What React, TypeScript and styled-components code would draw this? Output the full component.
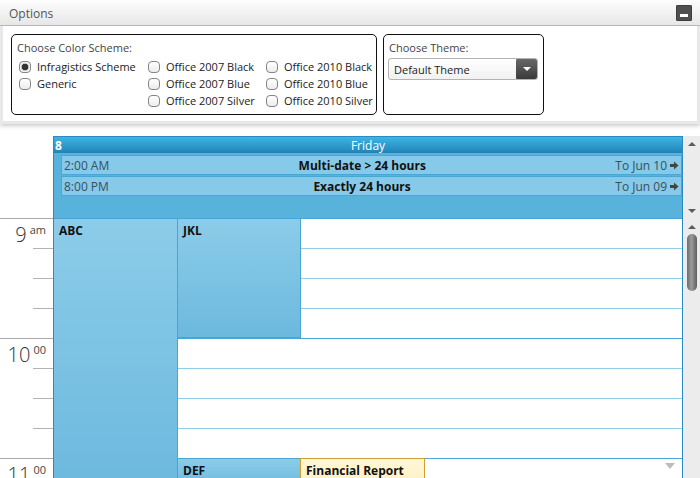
import styled, { createGlobalStyle } from 'styled-components';

const GlobalStyle = createGlobalStyle`
  html, body {
    margin: 0;
    padding: 0;
    background: #fff;
    overflow: hidden;
  }
  body {
    font-family: 'Open Sans', 'Noto Sans', 'Liberation Sans', sans-serif;
    color: #222;
  }
  * { box-sizing: border-box; }
`;

const schemes = [
  ['Infragistics Scheme', 'Office 2007 Black', 'Office 2010 Black'],
  ['Generic', 'Office 2007 Blue', 'Office 2010 Blue'],
  ['', 'Office 2007 Silver', 'Office 2010 Silver'],
];

const allDay = [
  { time: '2:00 AM', title: 'Multi-date > 24 hours', to: 'To Jun 10' },
  { time: '8:00 PM', title: 'Exactly 24 hours', to: 'To Jun 09' },
];

const hours = [
  { hour: '9', suffix: 'am' },
  { hour: '10', suffix: '00' },
  { hour: '11', suffix: '00' },
];

type Appt = {
  title: string;
  col: number;
  row: number;
  span: number;
  tone?: 'blue' | 'yellow';
};

const appointments: Appt[] = [
  { title: 'ABC', col: 1, row: 1, span: 9 },
  { title: 'JKL', col: 2, row: 1, span: 4 },
  { title: 'DEF', col: 2, row: 9, span: 1 },
  { title: 'Financial Report', col: 3, row: 9, span: 1, tone: 'yellow' },
];

export default function App() {
  return (
    <>
      <GlobalStyle />
      <Panel>
        <PanelHeader>
          <span>Options</span>
          <MinButton aria-label='minimize' />
        </PanelHeader>
        <PanelBody>
          <GroupBox $width={366}>
            <GroupTitle>Choose Color Scheme:</GroupTitle>
            <SchemeGrid>
              {schemes.flat().map((label, i) =>
                label ? (
                  <Option key={i}>
                    <Check $checked={i === 0} />
                    {label}
                  </Option>
                ) : (
                  <span key={i} />
                )
              )}
            </SchemeGrid>
          </GroupBox>
          <GroupBox $width={161}>
            <GroupTitle>Choose Theme:</GroupTitle>
            <Select>
              <span>Default Theme</span>
              <SelectButton>
                <Caret $dir='down' $color='#fff' />
              </SelectButton>
            </Select>
          </GroupBox>
        </PanelBody>
      </Panel>

      <Calendar>
        <TopRow>
          <Gutter />
          <DayHead>
            <DayHeader>
              <DayNumber>8</DayNumber>
              <span>Friday</span>
              <span />
            </DayHeader>
            <AllDayArea>
              {allDay.map((a) => (
                <AllDayEvent key={a.title}>
                  <EventTime>{a.time}</EventTime>
                  <AllDayTitle>{a.title}</AllDayTitle>
                  <EventTime>
                    {a.to}
                    <svg width='9' height='9' viewBox='0 0 9 9'>
                      <path d='M0 3h4V0.5L8.5 4.5 4 8.5V6H0z' fill='#444' />
                    </svg>
                  </EventTime>
                </AllDayEvent>
              ))}
            </AllDayArea>
          </DayHead>
          <ScrollBar $pad='6px 0 5px'>
            <Caret $dir='up' $color='#5c5c5c' />
            <Caret $dir='down' $color='#5c5c5c' />
          </ScrollBar>
        </TopRow>

        <GridRow>
          <TimeColumn>
            {hours.map((h) => (
              <HourBlock key={h.hour}>
                <HourLabel>
                  <HourDigits>{h.hour}</HourDigits>
                  <HourSuffix>{h.suffix}</HourSuffix>
                </HourLabel>
                <MinorSlot />
                <MinorSlot />
                <MinorSlot />
              </HourBlock>
            ))}
          </TimeColumn>
          <DayColumn>
            {Array.from({ length: 9 }, (_, i) => (
              <Slot key={i} $row={i + 1} $hour={i % 4 === 0} />
            ))}
            {appointments.map((a) => (
              <Appointment
                key={a.title}
                $col={a.col}
                $row={a.row}
                $span={a.span}
                $tone={a.tone ?? 'blue'}
              >
                {a.title}
              </Appointment>
            ))}
            <MoreIndicator />
          </DayColumn>
          <ScrollBar $pad='7px 0 6px'>
            <Caret $dir='up' $color='#5c5c5c' />
            <Thumb />
            <Spacer />
            <Caret $dir='down' $color='#5c5c5c' />
          </ScrollBar>
        </GridRow>
      </Calendar>
    </>
  );
}

const Panel = styled.section`
  background: #e8e8e8;
  padding-bottom: 3px;
  box-shadow: 0 2px 4px rgba(0, 0, 0, 0.2);
`;

const PanelHeader = styled.header`
  height: 26px;
  display: flex;
  align-items: center;
  justify-content: space-between;
  padding: 2px 8px 0 9px;
  background: linear-gradient(#fdfdfd, #e7e7e7);
  border-bottom: 1px solid #b7b7b7;
  font-size: 12px;
  color: #555;
`;

const MinButton = styled.button`
  width: 16px;
  height: 16px;
  padding: 0;
  margin-top: -2px;
  border: 1px solid #3d3d3d;
  border-radius: 1px;
  background: #4f4f4f;
  position: relative;
  &::after {
    content: '';
    position: absolute;
    left: 3px;
    right: 3px;
    top: 8px;
    height: 3px;
    background: #fff;
  }
`;

const PanelBody = styled.div`
  margin: 0 3px;
  height: 95px;
  background: #fff;
  padding: 8px 0 0 8px;
  display: flex;
  align-items: flex-start;
  gap: 6px;
`;

const GroupBox = styled.div<{ $width: number }>`
  width: ${(p) => p.$width}px;
  height: 81px;
  border: 1px solid #111;
  border-radius: 5px;
  padding: 5px 5px 0;
`;

const GroupTitle = styled.div`
  font-size: 11px;
  line-height: 15px;
  color: #444;
  margin-bottom: 3px;
`;

const SchemeGrid = styled.div`
  display: grid;
  grid-template-columns: 129px 118px auto;
  grid-auto-rows: 17px;
  padding-left: 2px;
`;

const Option = styled.label`
  display: flex;
  align-items: center;
  gap: 6px;
  font-size: 11px;
  color: #222;
  white-space: nowrap;
`;

const Check = styled.span<{ $checked?: boolean }>`
  width: 12px;
  height: 12px;
  flex: none;
  border: 1px solid #858585;
  border-radius: 4px;
  background: ${(p) =>
    p.$checked
      ? 'radial-gradient(circle, #333 0 3px, #bbb 3.5px, #f4f4f4 4.5px)'
      : 'linear-gradient(#fff, #ececec)'};
`;

const Select = styled.div`
  width: 150px;
  height: 22px;
  margin-left: -1px;
  display: flex;
  align-items: center;
  justify-content: space-between;
  border: 1px solid #b3b3b3;
  border-radius: 3px;
  background: linear-gradient(#fff, #f1f1f1);
  font-size: 11px;
  color: #222;
  padding-left: 5px;
  overflow: hidden;
`;

const SelectButton = styled.span`
  width: 22px;
  height: 22px;
  margin-right: -1px;
  display: flex;
  align-items: center;
  justify-content: center;
  border-radius: 3px;
  background: linear-gradient(#6a6a6a, #383838);
`;

const Caret = styled.span<{ $dir: 'up' | 'down'; $color: string }>`
  width: 0;
  height: 0;
  border-left: 4px solid transparent;
  border-right: 4px solid transparent;
  ${(p) =>
    p.$dir === 'up'
      ? `border-bottom: 4px solid ${p.$color};`
      : `border-top: 4px solid ${p.$color};`}
`;

const Calendar = styled.div`
  margin-top: 12px;
  display: flex;
  flex-direction: column;
`;

const TopRow = styled.div`
  display: grid;
  grid-template-columns: 53px 630px 17px;
  height: 82px;
`;

const Gutter = styled.div`
  background: #fff;
`;

const DayHead = styled.div`
  display: flex;
  flex-direction: column;
  border-left: 1px solid #2c8ac0;
  border-right: 1px solid #2c8ac0;
`;

const DayHeader = styled.div`
  height: 17px;
  display: grid;
  grid-template-columns: 1fr auto 1fr;
  align-items: center;
  padding: 0 1px;
  border-top: 1px solid #2c8ac0;
  background: linear-gradient(#3cb5e6, #2283b6);
  color: #fff;
  font-size: 12px;
  line-height: 15px;
`;

const DayNumber = styled.span`
  font-weight: 700;
`;

const AllDayArea = styled.div`
  flex: 1;
  background: #58b3dc;
  padding: 2px 0 0 7px;
  display: flex;
  flex-direction: column;
  gap: 1px;
`;

const AllDayEvent = styled.div`
  height: 20px;
  display: flex;
  align-items: center;
  padding: 0 2px 0 2px;
  background: #87c9e8;
  border: 1px solid #4aa6d3;
  font-size: 12px;
`;

const EventTime = styled.span`
  display: flex;
  align-items: center;
  gap: 3px;
  color: #35505f;
`;

const AllDayTitle = styled.span`
  flex: 1;
  text-align: center;
  font-weight: 700;
  color: #111;
`;

const ScrollBar = styled.div<{ $pad: string }>`
  background: #ececec;
  display: flex;
  flex-direction: column;
  align-items: center;
  justify-content: space-between;
  padding: ${(p) => p.$pad};
`;

const Thumb = styled.div`
  width: 10px;
  height: 57px;
  margin-top: 5px;
  border-radius: 5px;
  background: linear-gradient(90deg, #6d6d6d, #9a9a9a 45%, #5e5e5e);
`;

const Spacer = styled.div`
  flex: 1;
`;

const GridRow = styled.div`
  display: grid;
  grid-template-columns: 53px 630px 17px;
  height: 260px;
  overflow: hidden;
`;

const TimeColumn = styled.div`
  display: flex;
  flex-direction: column;
`;

const HourBlock = styled.div`
  display: flex;
  flex-direction: column;
  flex: none;
`;

const HourLabel = styled.div`
  height: 30px;
  border-top: 1px solid #a9a9a9;
  display: flex;
  justify-content: flex-end;
  align-items: flex-start;
  gap: 3px;
  padding: 4px 7px 0 0;
  color: #333;
`;

const HourDigits = styled.span`
  font-size: 20px;
  line-height: 24px;
  font-weight: 300;
`;

const HourSuffix = styled.span`
  font-size: 11px;
  line-height: 14px;
  color: #444;
`;

const MinorSlot = styled.div`
  height: 30px;
  margin-left: 33px;
  border-top: 1px solid #b3b3b3;
`;

const DayColumn = styled.div`
  position: relative;
  display: grid;
  grid-template-columns: 124px 123px 124px 1fr;
  grid-auto-rows: 30px;
  border-left: 1px solid #2c8ac0;
  border-right: 1px solid #2c8ac0;
  background: #fff;
`;

const Slot = styled.div<{ $row: number; $hour: boolean }>`
  grid-column: 1 / -1;
  grid-row: ${(p) => p.$row};
  border-top: 1px solid ${(p) => (p.$hour ? '#49a6d6' : '#90cfe9')};
`;

const Appointment = styled.div<{
  $col: number;
  $row: number;
  $span: number;
  $tone: 'blue' | 'yellow';
}>`
  grid-column: ${(p) => p.$col};
  grid-row: ${(p) => p.$row} / span ${(p) => p.$span};
  z-index: 1;
  padding: 3px 5px;
  font-size: 12px;
  font-weight: 700;
  color: #111;
  white-space: nowrap;
  overflow: hidden;
  border: 1px solid ${(p) => (p.$tone === 'yellow' ? '#cf9f32' : '#4aa5d3')};
  border-left-width: ${(p) => (p.$col === 1 ? 0 : 1)}px;
  margin-left: ${(p) => (p.$col === 1 ? 0 : -1)}px;
  background: ${(p) =>
    p.$tone === 'yellow'
      ? 'linear-gradient(#fff7d6, #fff0c0)'
      : 'linear-gradient(#8ccce9, #6cb9de)'};
`;

const MoreIndicator = styled.span`
  position: absolute;
  right: 7px;
  top: 245px;
  z-index: 2;
  border-left: 5px solid transparent;
  border-right: 5px solid transparent;
  border-top: 6px solid #bdbdbd;
`;
